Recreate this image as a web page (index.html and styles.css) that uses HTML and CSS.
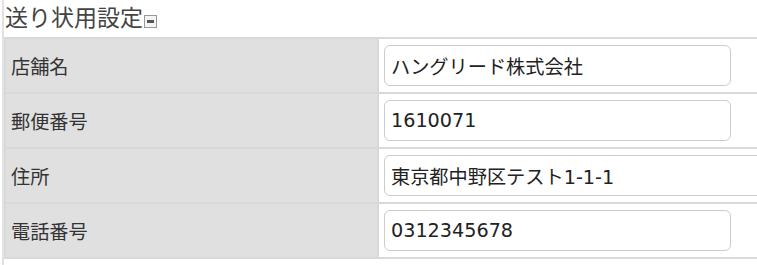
FILE: index.html
```html
<!DOCTYPE html>
<html lang="ja">
<head>
  <meta charset="UTF-8">
  <meta name="viewport" content="width=device-width, initial-scale=1.0">
  <title>送り状用設定</title>
  <link rel="stylesheet" href="styles.css">
</head>
<body>
  <div class="panel">
    <h2 class="panel-title">送り状用設定<span class="toggle"></span></h2>

    <!-- 送り状の差出人情報 -->
    <table class="form-table">
      <tr>
        <td class="label">店舗名</td>
        <td class="value"><input type="text" class="field" value="ハングリード株式会社"></td>
      </tr>
      <tr>
        <td class="label">郵便番号</td>
        <td class="value"><input type="text" class="field" value="1610071"></td>
      </tr>
      <tr>
        <td class="label">住所</td>
        <td class="value"><input type="text" class="field wide" value="東京都中野区テスト1-1-1"></td>
      </tr>
      <tr>
        <td class="label">電話番号</td>
        <td class="value"><input type="text" class="field" value="0312345678"></td>
      </tr>
    </table>
  </div>
</body>
</html>
```

FILE: styles.css
```css
html, body {
  overflow: hidden;
}

body {
  margin: 0;
  background: #fff;
  color: #333;
  font-family: "DejaVu Sans", "Noto Sans CJK JP", sans-serif;
  font-size: 19.2px;
}

.panel {
  margin-left: 2px;
  border-left: 2px solid #e2e2e2;
  min-height: 265px;
  overflow: hidden;
}

.panel-title {
  margin: 0;
  padding-left: 1px;
  height: 37px;
  line-height: 37px;
  font-size: 23px;
  font-weight: normal;
  color: #444;
  white-space: nowrap;
}

/* 開閉アイコン */
.toggle {
  display: inline-block;
  width: 11px;
  height: 11px;
  border: 1px solid #999;
  background: #f4f4f4;
  position: relative;
  vertical-align: -2px;
  margin-left: 1px;
}

.toggle::after {
  content: '';
  position: absolute;
  left: 2px;
  right: 2px;
  top: 4px;
  height: 3px;
  background: #555;
}

.form-table {
  table-layout: fixed;
  width: 880px;
  border-collapse: separate;
  border-spacing: 0;
  border-top: 2px solid #d9d9d9;
  border-left: 2px solid #d9d9d9;
}

.form-table td {
  border-right: 2px solid #d9d9d9;
  border-bottom: 2px solid #d9d9d9;
  padding: 6px 5px;
  white-space: nowrap;
}

.form-table .label {
  width: 361px;
  background: #e0e0e0;
  vertical-align: middle;
}

.form-table .value {
  background: #fff;
}

.field {
  display: block;
  box-sizing: border-box;
  width: 347px;
  height: 41px;
  margin: 0;
  padding: 0 6px;
  border: 1px solid #ccc;
  border-radius: 6px;
  font-family: "DejaVu Sans", "Noto Sans CJK JP", sans-serif;
  font-size: 19.2px;
  color: #222;
  background: #fff;
}

.field.wide {
  width: 440px;
}
```
